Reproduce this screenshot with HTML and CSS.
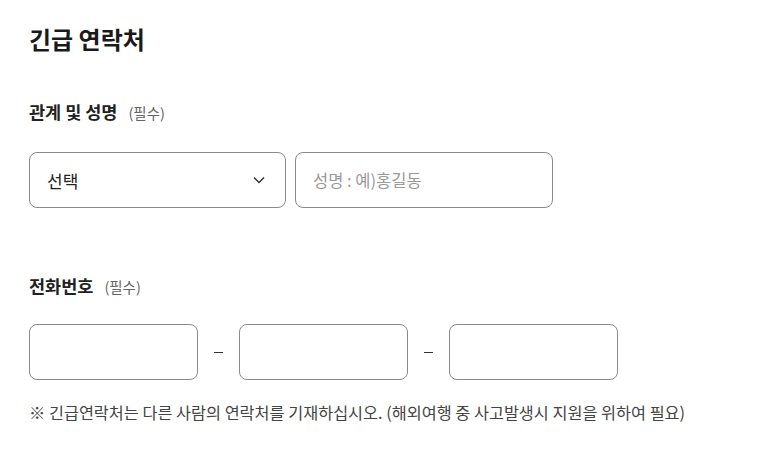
FILE: index.html
```html
<!DOCTYPE html>
<html>
<head>
  <meta charset="utf-8">
  <title>긴급 연락처</title>
  <link rel="stylesheet" href="styles.css">
</head>
<body>
  <div class="section">
    <h2 class="title">긴급 연락처</h2>

    <div class="field">
      <label class="label">관계 및 성명 <span class="req">(필수)</span></label>
      <div class="row">
        <div class="select">
          <span>선택</span>
          <svg class="chevron" width="12" height="8" viewBox="0 0 12 8">
            <path d="M1 1.5 L6 6.5 L11 1.5" fill="none" stroke="#333" stroke-width="1.5"/>
          </svg>
        </div>
        <input type="text" class="input name" placeholder="성명 : 예)홍길동">
      </div>
    </div>

    <div class="field phone-field">
      <label class="label">전화번호 <span class="req">(필수)</span></label>
      <div class="row">
        <input type="text" class="input phone">
        <span class="dash"></span>
        <input type="text" class="input phone">
        <span class="dash"></span>
        <input type="text" class="input phone">
      </div>
    </div>

    <p class="note">※ 긴급연락처는 다른 사람의 연락처를 기재하십시오. (해외여행 중 사고발생시 지원을 위하여 필요)</p>
  </div>
</body>
</html>
```

FILE: styles.css
```css
body {
  margin: 0;
  padding: 24px 0 0 29px;
  font-family: "Noto Sans CJK KR", "Noto Sans", sans-serif;
  color: #222;
  background: #fff;
}

.title {
  margin: 0;
  font-size: 24px;
  line-height: 30px;
  font-weight: bold;
  color: #1a1a1a;
}

.field {
  margin-top: 46px;
}

.phone-field {
  margin-top: 66px;
}

.label {
  display: block;
  height: 24px;
  font-size: 17.5px;
  line-height: 24px;
  font-weight: bold;
  color: #222;
}

.req {
  margin-left: 7px;
  font-size: 14.5px;
  line-height: 1;
  font-weight: normal;
  color: #666;
}

.row {
  display: flex;
  align-items: center;
  margin-top: 28px;
}

.phone-field .row {
  margin-top: 26px;
}

.select {
  box-sizing: border-box;
  width: 257px;
  height: 56px;
  border: 1px solid #8a8a8a;
  border-radius: 8px;
  padding: 0 20px 0 17px;
  display: flex;
  align-items: center;
  justify-content: space-between;
  font-size: 17px;
  color: #222;
}

.input {
  box-sizing: border-box;
  height: 56px;
  border: 1px solid #8a8a8a;
  border-radius: 8px;
  padding: 0 17px;
  font-family: inherit;
  font-size: 16.5px;
  color: #222;
  outline: none;
}

.input::placeholder {
  color: #999;
}

.name {
  width: 258px;
  margin-left: 9px;
}

.phone {
  width: 169px;
}

.dash {
  width: 41px;
  display: flex;
  justify-content: center;
}

.dash::before {
  content: "";
  display: block;
  width: 9px;
  height: 1px;
  margin-top: 1px;
  background: #333;
}

.note {
  margin: 21px 0 0;
  font-size: 16.3px;
  line-height: 22px;
  color: #444;
}
```
